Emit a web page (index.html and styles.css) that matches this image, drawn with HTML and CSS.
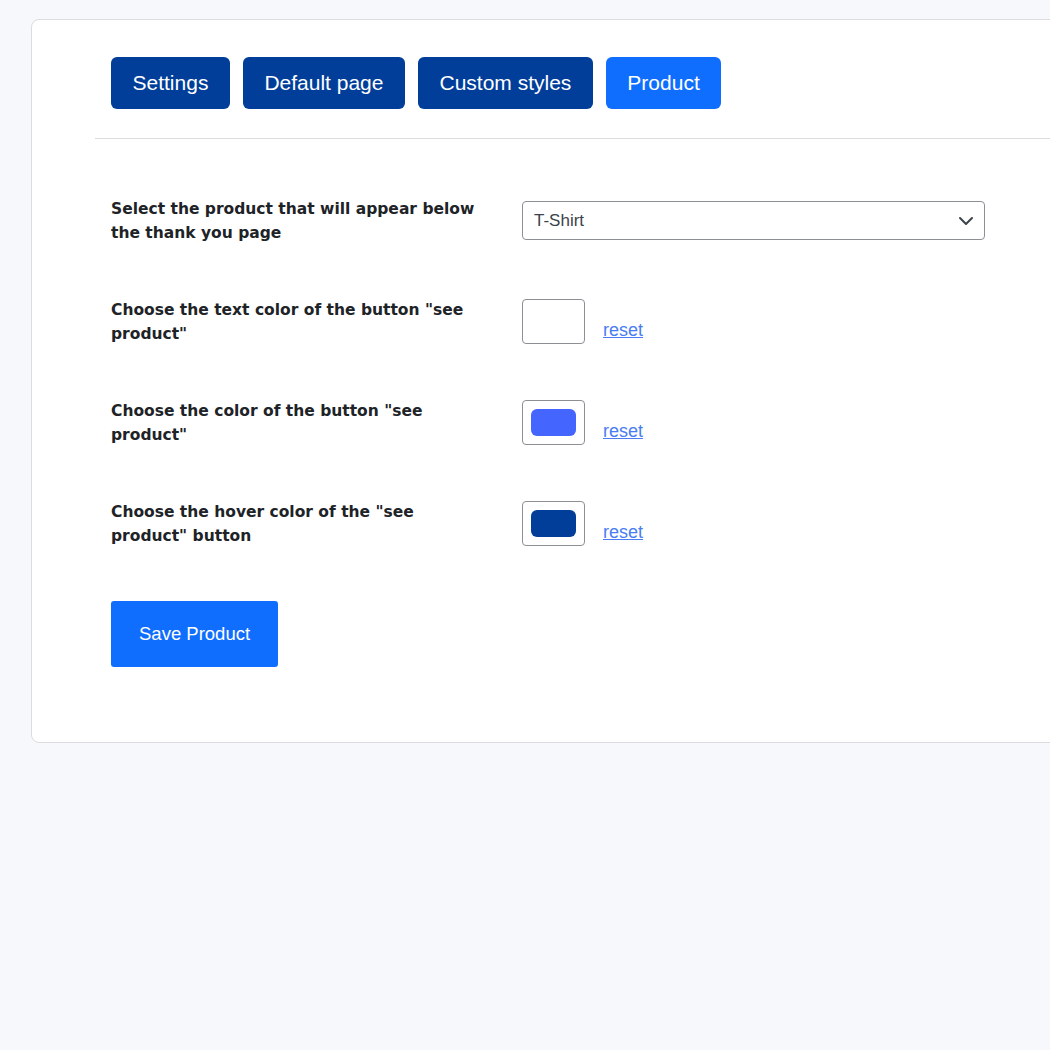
FILE: index.html
```html
<!DOCTYPE html>
<html lang="en">
<head>
    <meta charset="UTF-8">
    <meta name="viewport" content="width=device-width, initial-scale=1.0">
    <title>Thank You Page - Product</title>
    <link rel="stylesheet" href="styles.css">
</head>
<body>
    <div class="panel">
        <nav class="tabs">
            <a href="#" class="tab">Settings</a>
            <a href="#" class="tab">Default page</a>
            <a href="#" class="tab">Custom styles</a>
            <a href="#" class="tab active">Product</a>
        </nav>

        <form class="product-form">
            <div class="row">
                <div class="row-label">
                    <label for="product_id">Select the product that will appear below the thank you page</label>
                </div>
                <div class="select-wrap">
                    <select id="product_id" name="product_id">
                        <option>T-Shirt</option>
                        <option>Hoodie</option>
                        <option>Cap</option>
                    </select>
                    <svg class="chevron" width="16" height="10" viewBox="0 0 16 10">
                        <path d="M2 2l6 6 6-6" fill="none" stroke="#3c434a" stroke-width="2" stroke-linecap="round" stroke-linejoin="round"/>
                    </svg>
                </div>
            </div>

            <div class="row">
                <div class="row-label">
                    <label for="btn_text_color">Choose the text color of the button "see product"</label>
                </div>
                <div class="color-field">
                    <input type="color" id="btn_text_color" name="btn_text_color" value="#ffffff">
                    <a href="#" class="reset">reset</a>
                </div>
            </div>

            <div class="row">
                <div class="row-label">
                    <label for="btn_color">Choose the color of the button "see product"</label>
                </div>
                <div class="color-field">
                    <input type="color" id="btn_color" name="btn_color" value="#4466ff">
                    <a href="#" class="reset">reset</a>
                </div>
            </div>

            <div class="row">
                <div class="row-label">
                    <label for="btn_hover_color">Choose the hover color of the "see product" button</label>
                </div>
                <div class="color-field">
                    <input type="color" id="btn_hover_color" name="btn_hover_color" value="#003e9a">
                    <a href="#" class="reset">reset</a>
                </div>
            </div>

            <button type="button" class="save-btn">Save Product</button>
        </form>
    </div>
</body>
</html>
```

FILE: styles.css
```css
body {
    margin: 0;
    background-color: #f7f8fc;
    font-family: 'Liberation Sans', Arial, sans-serif;
    color: #1d2327;
    overflow: hidden;
}

.panel {
    margin: 19px 0 0 31px;
    width: 1100px;
    background-color: #fff;
    border: 1px solid #dcdcde;
    border-radius: 8px;
    padding: 37px 0 75px 63px;
}

.tabs {
    display: flex;
    gap: 13px;
    padding: 0 16px 29px;
    border-bottom: 1px solid #dcdcde;
}

.tab {
    display: flex;
    align-items: center;
    height: 52px;
    padding: 0 21.5px;
    background-color: #003e9a;
    color: #fff;
    font-size: 21px;
    text-decoration: none;
    border-radius: 6px;
}

.tab.active {
    background-color: #0f6efd;
}

.product-form {
    padding: 31px 16px 0;
}

.row {
    display: flex;
    align-items: center;
    height: 101px;
}

.row-label {
    width: 411px;
    flex-shrink: 0;
}

/* labels use a wider bold face so the lines break like the admin screen */
.row-label label {
    display: block;
    max-width: 375px;
    font-family: 'DejaVu Sans', Verdana, sans-serif;
    font-size: 15.5px;
    font-weight: bold;
    line-height: 24px;
    color: #1d2327;
}

.select-wrap {
    position: relative;
}

.select-wrap select {
    appearance: none;
    -webkit-appearance: none;
    width: 463px;
    height: 39px;
    padding: 0 36px 0 11px;
    border: 1px solid #8c8f94;
    border-radius: 4px;
    background-color: #fff;
    font-family: 'Liberation Sans', Arial, sans-serif;
    font-size: 17px;
    color: #3c434a;
}

.chevron {
    position: absolute;
    right: 11px;
    top: 15px;
    pointer-events: none;
}

.color-field {
    display: flex;
    align-items: flex-end;
    gap: 18px;
}

.color-field input[type="color"] {
    -webkit-appearance: none;
    appearance: none;
    width: 63px;
    height: 45px;
    padding: 8px;
    box-sizing: border-box;
    border: 1px solid #8c8f94;
    border-radius: 4px;
    background-color: #fff;
    cursor: pointer;
}

.color-field input[type="color"]::-webkit-color-swatch-wrapper {
    padding: 0;
}

.color-field input[type="color"]::-webkit-color-swatch {
    border: none;
    border-radius: 6px;
}

.reset {
    font-size: 18px;
    line-height: 20px;
    margin-bottom: 4px;
    color: #4a7df2;
}

.save-btn {
    margin-top: 27px;
    height: 66px;
    padding: 0 28px;
    border: none;
    border-radius: 3px;
    background-color: #0f6efd;
    color: #fff;
    font-family: 'Liberation Sans', Arial, sans-serif;
    font-size: 18.5px;
    cursor: pointer;
}
```
